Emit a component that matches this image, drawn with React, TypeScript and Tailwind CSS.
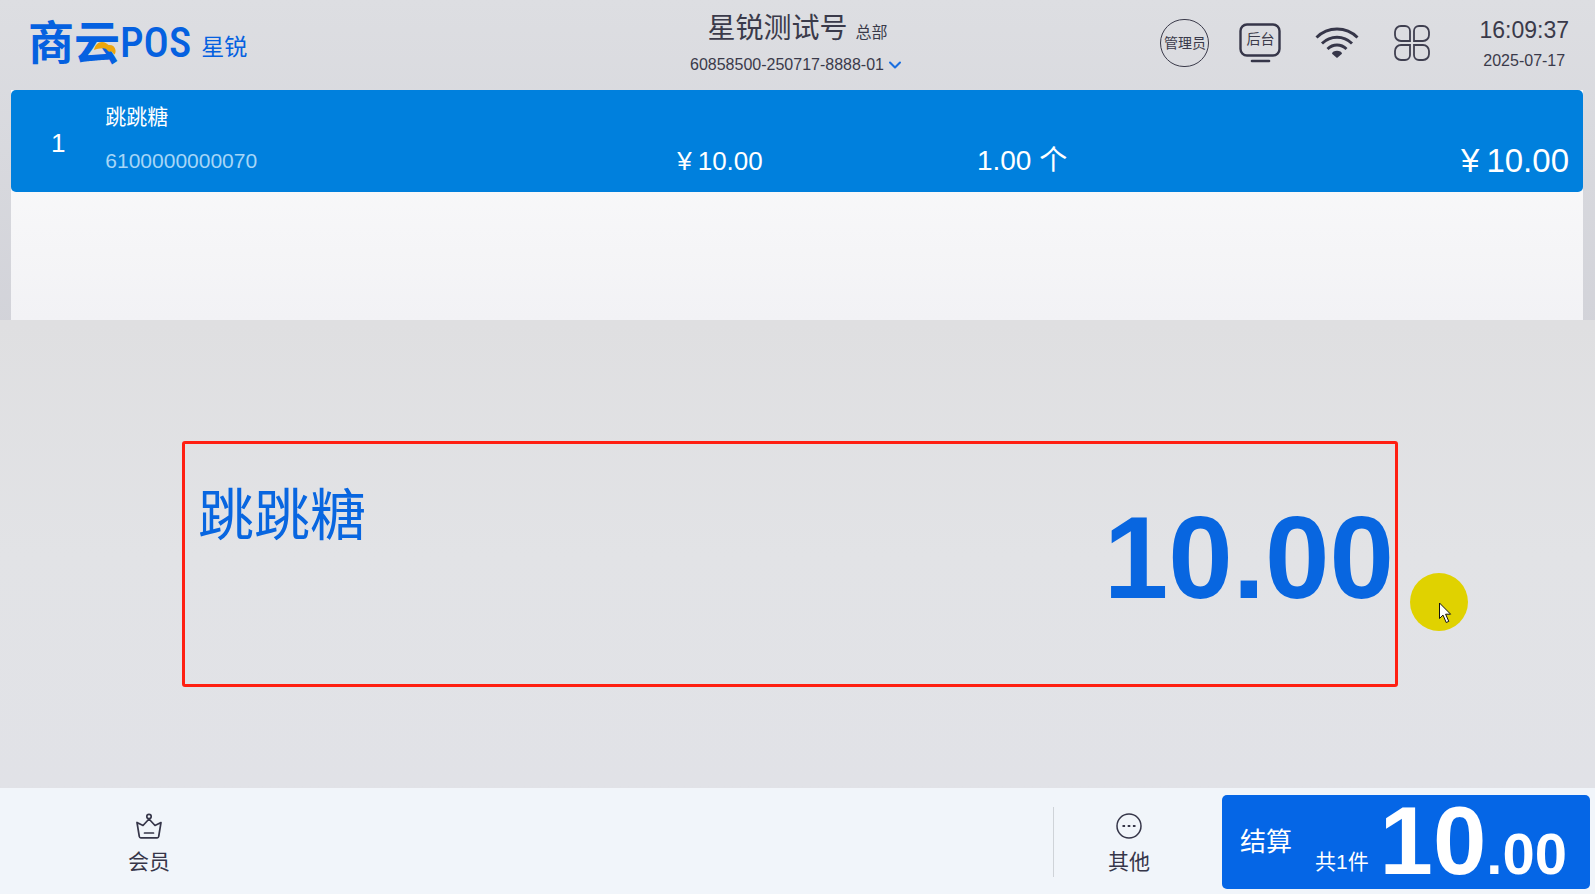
import { ChevronDown } from 'lucide-react';

const items = [
  { id: 1, name: '跳跳糖', barcode: '6100000000070', price: '10.00', qty: '1.00', unit: '个', total: '10.00' },
];

function CloudIcon() {
  return (
    <svg viewBox="0 0 22 13" className="absolute left-[66px] top-[22px] w-[22px] h-[13px]" aria-hidden="true">
      <path
        d="M0 8C1 3 4 0 8 0c3 0 5 1.500 6.500 3C18 2.500 21 4.500 21.500 8c.3 2-.3 3.500-1 4.500-1-.5-2-2-3-3.200-1.500.8-3 .4-4-.8-1-1.800-3-2.500-5-2.200C5 6.300 3 7 0 8Z"
        fill="#eda60c"
      />
    </svg>
  );
}

function BackOfficeIcon() {
  return (
    <svg viewBox="0 0 42 40" className="w-[42px] h-10" fill="none" stroke="#363649" aria-hidden="true">
      <rect x="1.500" y="1.500" width="39" height="31" rx="6.500" strokeWidth="2.400" />
      <path d="M13 38h17" strokeWidth="2.600" strokeLinecap="round" />
    </svg>
  );
}

function WifiIcon() {
  return (
    <svg viewBox="0 0 44 32" className="w-11 h-8" fill="none" stroke="#363649" strokeWidth="2.900" aria-hidden="true">
      <path d="M1.500 10.500C13 -.8 31 -.8 42.500 10.500" />
      <path d="M7 16.500c8.500-8.300 21.500-8.300 30 0" />
      <path d="M12.500 22c5.500-5.300 13.500-5.300 19 0" />
      <path d="M22 31l-5-4.300c0-4 10-4 10 0Z" fill="#363649" stroke="none" />
    </svg>
  );
}

function AppsIcon() {
  return (
    <svg viewBox="0 0 36 36" className="w-9 h-9" fill="none" stroke="#3f3f50" strokeWidth="1.800" aria-hidden="true">
      <path d="M7 1h4a5 5 0 0 1 5 5v10H7a6 6 0 0 1-6-6V7a6 6 0 0 1 6-6Z" />
      <path d="M25 1h4a6 6 0 0 1 6 6v3a6 6 0 0 1-6 6h-9V6a5 5 0 0 1 5-5Z" />
      <path d="M7 20h9v10a5 5 0 0 1-5 5H7a6 6 0 0 1-6-6v-3a6 6 0 0 1 6-6Z" />
      <path d="M20 20h9a6 6 0 0 1 6 6v3a6 6 0 0 1-6 6h-4a5 5 0 0 1-5-5Z" />
    </svg>
  );
}

function CrownIcon() {
  return (
    <svg viewBox="0 0 26 26" className="w-[26px] h-[26px]" fill="none" stroke="#363649" strokeWidth="1.700" strokeLinejoin="round" strokeLinecap="round" aria-hidden="true">
      <circle cx="13" cy="3.500" r="2.200" />
      <path d="M13 6L7 12.500 1 9.500l2.300 14a1.500 1.500 0 0 0 1.500 1.300h16.400a1.500 1.500 0 0 0 1.500-1.300L25 9.500 19 12.500Z" />
      <path d="M8.500 20h9" />
    </svg>
  );
}

function MoreIcon() {
  return (
    <svg viewBox="0 0 26 26" className="w-[26px] h-[26px]" fill="none" stroke="#363649" strokeWidth="1.500" aria-hidden="true">
      <circle cx="13" cy="13" r="12" />
      <path d="M6.500 13h2.600M11.700 13h2.600M16.900 13h2.600" strokeWidth="1.800" />
    </svg>
  );
}

function Header() {
  return (
    <header className="grid grid-cols-3 h-[90px] text-[#3a3a4a]">
      {/* Logo */}
      <div className="flex items-center pl-7 pb-1 text-[#0561e0]">
        <div className="relative flex items-center">
          <span className="text-[46px] leading-[46px] font-bold">商云</span>
          <span className="font-['Roboto_Condensed','Liberation_Sans_Narrow','Liberation_Sans',sans-serif] text-[42px] leading-[46px] font-medium">POS</span>
          <CloudIcon />
        </div>
        <span className="pl-[10px] pt-2 text-[23px]">星锐</span>
      </div>

      {/* Store */}
      <div className="flex flex-col items-center pt-[9px]">
        <div className="flex items-baseline gap-2">
          <h1 className="text-[28px] leading-[40px]">星锐测试号</h1>
          <span className="text-base">总部</span>
        </div>
        <button type="button" className="flex items-center gap-px text-base leading-8">
          60858500-250717-8888-01
          <ChevronDown className="w-5 h-5 text-[#1a6fe0]" strokeWidth={2.5} />
        </button>
      </div>

      {/* Tools */}
      <div className="flex justify-end pr-[26px]">
        <div className="flex items-center pb-1">
          <button type="button" className="mr-[30px] flex items-center justify-center w-[49px] h-12 rounded-full border border-[#3a3a4a] text-sm whitespace-nowrap">
            管理员
          </button>
          <button type="button" className="relative mr-[34px]">
            <BackOfficeIcon />
            <span className="absolute inset-x-0 top-0 text-center text-sm leading-8">后台</span>
          </button>
          <button type="button" aria-label="网络" className="mr-[35px]">
            <WifiIcon />
          </button>
          <button type="button" aria-label="应用" className="mr-[49px]">
            <AppsIcon />
          </button>
        </div>
        <div className="flex flex-col items-center pt-[14px]">
          <time className="text-[23px] leading-8">16:09:37</time>
          <time className="text-base leading-[30px]">2025-07-17</time>
        </div>
      </div>
    </header>
  );
}

function ItemTable() {
  return (
    <div className="ml-[11px] mr-3 h-[230px] bg-linear-to-b from-[#fcfcfc] to-[#f2f2f5]">
      <div className="rounded-[5px] bg-[#0080dd] text-white">
        <table className="w-full table-fixed">
          <tbody>
            {items.map((item) => (
              <tr key={item.id} className="h-[102px] align-bottom">
                <td className="w-[6%] pt-1 align-middle text-center text-[26px]">{item.id}</td>
                <td className="w-[36%] pb-4 text-[21px]">
                  <p className="leading-[30px]">{item.name}</p>
                  <p className="pt-[14px] leading-[30px] text-[#a6d6f7]">{item.barcode}</p>
                </td>
                <td className="w-[19%] pl-[6px] pb-3 text-[26px] leading-[38px]">
                  <span className="mr-[6px]">¥</span>{item.price}
                </td>
                <td className="w-[20%] pl-[7px] pb-3 text-[28px] leading-[38px]">
                  {item.qty} {item.unit}
                </td>
                <td className="pr-[14px] pb-3 text-right text-[33px] leading-[38px]">
                  <span className="mr-[7px]">¥</span>{item.total}
                </td>
              </tr>
            ))}
          </tbody>
        </table>
      </div>
    </div>
  );
}

function CurrentItem() {
  return (
    <main className="relative flex grow flex-col bg-linear-to-b from-[#dfdfe1] via-[#e2e3e6] to-[#e1e2e7] pt-[121px] pb-[101px] pl-[182px] pr-[197px]">
      <section className="flex grow justify-between rounded-[3px] border-3 border-[#ff1f12] pl-[13px] pr-px text-[#0866e0]">
        <h2 className="pt-[36px] text-[56px] leading-[72px]">跳跳糖</h2>
        <p className="pt-[48px] text-[116px] leading-[132px] font-bold">10.00</p>
      </section>

      {/* Pointer */}
      <div className="absolute right-[127px] top-[253px] w-[58px] h-[58px] rounded-full bg-[#e0d200]">
        <svg viewBox="0 0 13 22" className="absolute left-[29px] top-[29px] w-[13px] h-[22px]" aria-hidden="true">
          <path d="M.5 1v15.500l3.500-3.400 3.200 7.400 2.600-1.100-3.200-7.200h5Z" fill="#fff" stroke="#111" />
        </svg>
      </div>
    </main>
  );
}

function Footer() {
  return (
    <footer className="flex h-[106px] items-center bg-[#f1f5fa] pt-[2px] text-[#363649]">
      <button type="button" className="flex w-[298px] flex-col items-center gap-2 pt-[6px] text-[21px] leading-[30px]">
        <CrownIcon />
        会员
      </button>
      <div className="grow" />
      <div className="h-[70px] w-px bg-[#cfd3d8]" />
      <button type="button" className="flex w-[150px] flex-col items-center gap-2 pt-[6px] text-[21px] leading-[30px]">
        <MoreIcon />
        其他
      </button>
      <button type="button" className="ml-[18px] mr-[5px] flex h-[94px] w-[368px] items-center rounded-[5px] bg-[#0566e6] pl-[18px] pr-[23px] text-white">
        <span className="text-[26px]">结算</span>
        <span className="pl-[23px] pt-10 text-[21px]">共1件</span>
        <span className="ml-auto pt-[10px] text-[58px] leading-[84px] font-bold">
          <span className="text-[96px]">10</span>.00
        </span>
      </button>
    </footer>
  );
}

export default function App() {
  return (
    <div className="flex min-h-screen flex-col bg-linear-to-b from-[#dddee2] to-[#c0c0ca] font-['Liberation_Sans','Noto_Sans_CJK_SC',sans-serif]">
      <Header />
      <ItemTable />
      <CurrentItem />
      <Footer />
    </div>
  );
}
